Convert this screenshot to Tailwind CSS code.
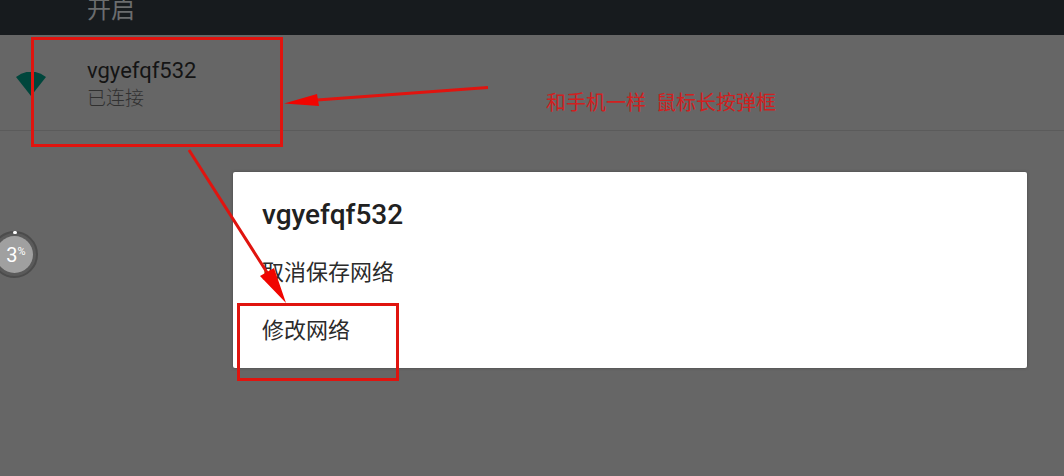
<!DOCTYPE html>
<html lang="zh-CN">
  <head>
    <meta charset="UTF-8" />
    <meta name="viewport" content="width=device-width, initial-scale=1.0" />
    <script src="https://cdn.jsdelivr.net/npm/@tailwindcss/browser@4"></script>
    <title>WLAN</title>
  </head>
  <body class="relative min-h-screen overflow-hidden bg-[#666666] font-[Roboto,'Noto_Sans_CJK_SC',sans-serif]">
    <!-- WLAN 开关栏 -->
    <header class="flex h-[35px] items-end bg-[#171b1e] pb-2 pl-[87px]">
      <div class="text-2xl leading-[34px] text-[#6b6d6e]">开启</div>
    </header>

    <!-- 网络列表 -->
    <main>
      <button type="button" class="flex w-full items-center border-b border-[#5b5b5b] pt-[22px] pb-[17px] pl-4 text-left">
        <svg class="mr-[41px] h-[26px] w-[30px] shrink-0" viewBox="0 0 30 26">
          <path d="M0 5Q15-6 30 5L15 24Z" fill="#00463c" />
        </svg>
        <span class="flex flex-col">
          <span class="text-[22px] leading-7 text-[#141414]">vgyefqf532</span>
          <span class="text-[19px] leading-7 font-light text-[#303030]">已连接</span>
        </span>
      </button>

      <!-- 长按弹框 -->
      <section role="dialog" aria-labelledby="ssid" class="mt-[41px] mr-[37px] ml-[233px] rounded-xs bg-white pt-[25px] pb-[9px] shadow-[0_0_3px_#444444]">
        <h2 id="ssid" class="px-[29px] text-[28px] leading-9 font-medium text-[#212121]">vgyefqf532</h2>
        <div class="mt-[10px] flex flex-col">
          <button type="button" class="h-[58px] px-[29px] text-left text-[22px] text-[#2b2b2b]">取消保存网络</button>
          <button type="button" class="h-[58px] px-[29px] text-left text-[22px] text-[#2b2b2b]">修改网络</button>
        </div>
      </section>
    </main>

    <!-- 悬浮球 -->
    <div class="absolute top-[231px] left-[-9px] flex size-[47px] items-center justify-center rounded-full border-2 border-[#4c4c4c] bg-[#5a5a5a]">
      <div class="flex size-[37px] items-center justify-center rounded-full bg-[#a0a0a0] pl-[3px] text-white">
        <span class="text-xl">3</span><span class="pb-1 text-[11px]">%</span>
      </div>
      <div class="absolute -top-0.5 h-[3px] w-1 rounded-full bg-white"></div>
    </div>

    <!-- 标注 -->
    <p class="absolute top-[89px] left-[546px] text-xl leading-7 whitespace-nowrap text-[#d02020] font-['Liberation_Serif','Noto_Sans_CJK_SC',serif]">和手机一样&nbsp; 鼠标长按弹框</p>
    <svg class="pointer-events-none absolute top-0 left-0" width="1064" height="476" viewBox="0 0 1064 476">
      <g fill="none" stroke="#e0140f" stroke-width="3">
        <rect x="32.5" y="38.5" width="249" height="107" />
        <rect x="238.5" y="304.5" width="159" height="75" />
        <path d="M488 87.500L317 100M189 150L268 274" />
      </g>
      <path d="M284 103.500L317 94L319 106ZM286 303L260 276L274 268Z" fill="#f00500" />
    </svg>
  </body>
</html>
